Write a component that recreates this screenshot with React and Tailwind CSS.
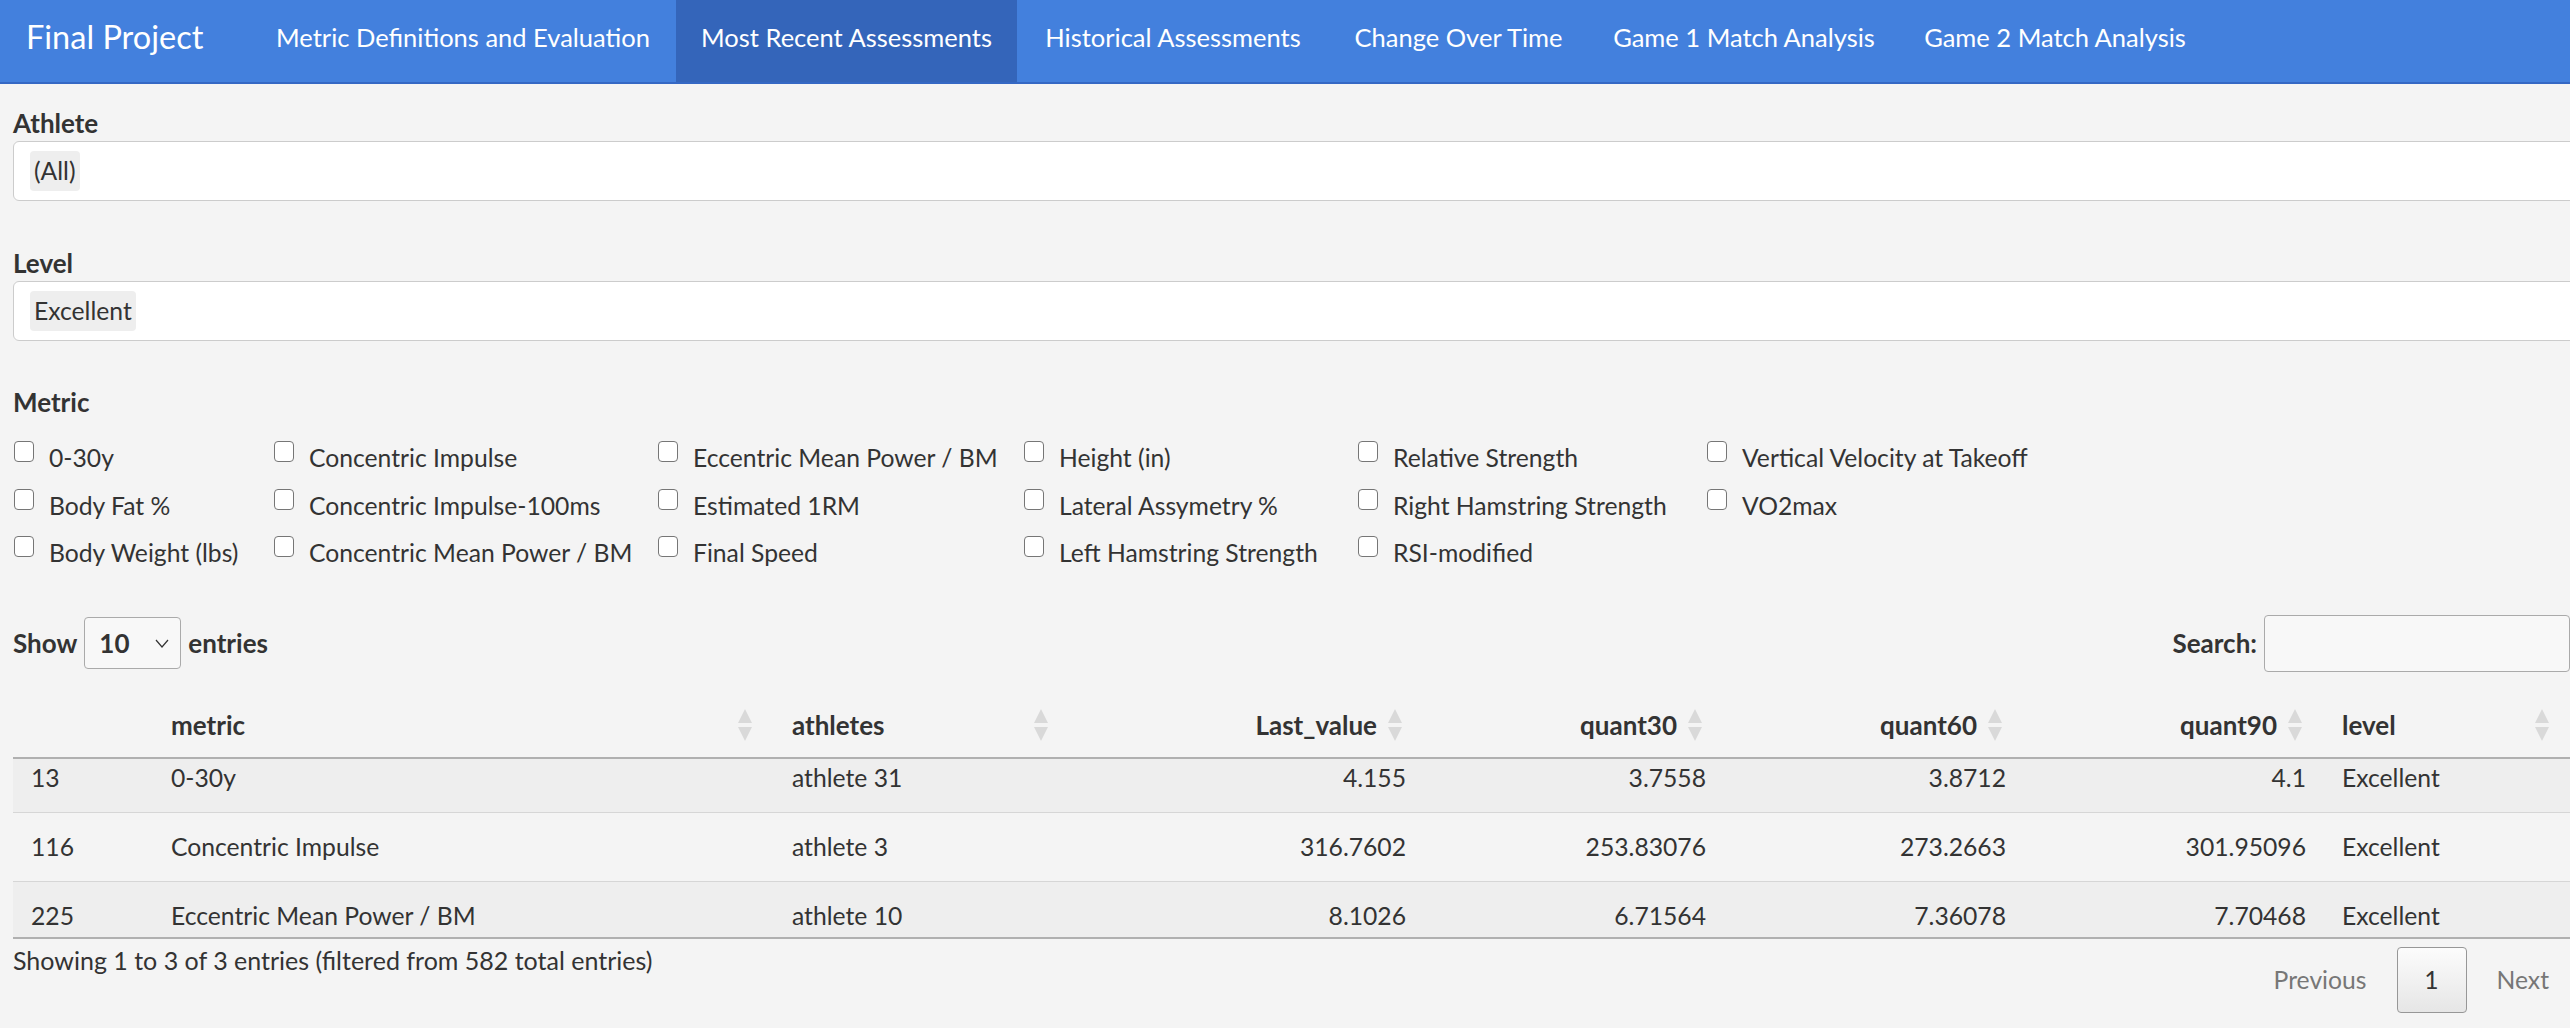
import React from "react";

const navItems = [
    { label: "Metric Definitions and Evaluation", w: "w-[426px]" },
    { label: "Most Recent Assessments", w: "w-[341px]", active: true },
    { label: "Historical Assessments", w: "w-[312px]" },
    { label: "Change Over Time", w: "w-[259px]" },
    { label: "Game 1 Match Analysis", w: "w-[312px]" },
    { label: "Game 2 Match Analysis", w: "w-[310px]" },
];

const metrics = [
    "0-30y",
    "Body Fat %",
    "Body Weight (lbs)",
    "Concentric Impulse",
    "Concentric Impulse-100ms",
    "Concentric Mean Power / BM",
    "Eccentric Mean Power / BM",
    "Estimated 1RM",
    "Final Speed",
    "Height (in)",
    "Lateral Assymetry %",
    "Left Hamstring Strength",
    "Relative Strength",
    "Right Hamstring Strength",
    "RSI-modified",
    "Vertical Velocity at Takeoff",
    "VO2max",
];

const rows = [
    ["13", "0-30y", "athlete 31", "4.155", "3.7558", "3.8712", "4.1", "Excellent"],
    ["116", "Concentric Impulse", "athlete 3", "316.7602", "253.83076", "273.2663", "301.95096", "Excellent"],
    ["225", "Eccentric Mean Power / BM", "athlete 10", "8.1026", "6.71564", "7.36078", "7.70468", "Excellent"],
];

const SortIcon = () => (
    <svg width="14" height="32" viewBox="0 0 14 32" className="shrink-0">
        <polygon points="7,0 14,14 0,14" fill="#d9d9d9" />
        <polygon points="0,18 14,18 7,32" fill="#d9d9d9" />
    </svg>
);

const Cols = () => (
    <colgroup>
        <col className="w-[140px]" />
        <col className="w-[621px]" />
        <col className="w-[296px]" />
        <col className="w-[354px]" />
        <col className="w-[300px]" />
        <col className="w-[300px]" />
        <col className="w-[300px]" />
        <col className="w-[247px]" />
    </colgroup>
);

const SelectBox = ({ value }) => (
    <div className="w-[2600px] h-[60px] bg-white border border-[#cccccc] rounded-[6px] flex items-center pl-[16px]">
        <span className="h-[40px] px-[4px] bg-[#eeeeee] rounded-[4px] flex items-center text-[24.7px] leading-none">
            {value}
        </span>
    </div>
);

export default function App() {
    return (
        <div className="w-[2570px] h-[1028px] overflow-hidden bg-[#f4f4f4] text-[#333333] text-[24.7px] font-['Lato',sans-serif]">
            {/* navbar */}
            <nav className="flex h-[84px] bg-[#4380dd] border-b-2 border-[#3568c4] text-white">
                <div className="w-[250px] pl-[26px] pb-[7px] flex items-center text-[32.5px]">Final Project</div>
                {navItems.map((item) => (
                    <div
                        key={item.label}
                        className={`${item.w} pb-[7px] flex items-center justify-center text-[25.5px] ${
                            item.active ? "bg-[#3465ba]" : ""
                        }`}
                    >
                        {item.label}
                    </div>
                ))}
            </nav>

            <div className="pl-[13px] pt-[21px]">
                <div className="text-[26px] leading-[36px] font-bold">Athlete</div>
                <SelectBox value="(All)" />

                <div className="mt-[44px] text-[26px] leading-[36px] font-bold">Level</div>
                <SelectBox value="Excellent" />

                <div className="mt-[43px] text-[26px] leading-[36px] font-bold">Metric</div>
                <div className="mt-[14px] pl-[1px] grid grid-flow-col grid-rows-3 grid-cols-[260px_384px_366px_334px_349px_auto]">
                    {metrics.map((m) => (
                        <label key={m} className="h-[47.5px] flex items-center gap-[15px] whitespace-nowrap">
                            <input
                                type="checkbox"
                                className="appearance-none w-[20px] h-[21px] mb-[12px] border border-[#767676] rounded-[4px] bg-white shrink-0"
                            />
                            {m}
                        </label>
                    ))}
                </div>

                {/* datatable */}
                <div className="w-[2557px] mt-[38px]">
                    <div className="flex items-center justify-between h-[57px]">
                        <div className="flex items-center gap-[7px] text-[26px] font-bold">
                            <span>Show</span>
                            <div className="w-[97px] h-[52px] border border-[#aaaaaa] rounded-[4px] bg-[#f8f8f8] flex items-center justify-between pl-[14px] pr-[11px]">
                                <span>10</span>
                                <svg width="14" height="9" viewBox="0 0 14 9">
                                    <path d="M1 1 L7 8 L13 1" fill="none" stroke="#333" strokeWidth="1.2" />
                                </svg>
                            </div>
                            <span>entries</span>
                        </div>
                        <div className="flex items-center gap-[7px] text-[26px] font-bold">
                            <span>Search:</span>
                            <div className="w-[306px] h-[57px] border border-[#aaaaaa] rounded-[4px] bg-[#f8f8f8]" />
                        </div>
                    </div>

                    <table className="mt-[26px] table-fixed border-collapse w-[2558px] text-[26px]">
                        <Cols />
                        <thead>
                            <tr className="h-[60px] border-b-2 border-[#b0b0b0]">
                                <th />
                                <th className="pl-[18px] pr-[22px] font-bold text-left">
                                    <div className="flex items-center justify-between pb-[4px]">
                                        <span>metric</span>
                                        <SortIcon />
                                    </div>
                                </th>
                                <th className="pl-[18px] pr-[22px] font-bold text-left">
                                    <div className="flex items-center justify-between pb-[4px]">
                                        <span>athletes</span>
                                        <SortIcon />
                                    </div>
                                </th>
                                {["Last_value", "quant30", "quant60", "quant90"].map((h) => (
                                    <th key={h} className="pl-[18px] pr-[22px] font-bold">
                                        <div className="flex items-center justify-end gap-[11px] pb-[4px]">
                                            <span>{h}</span>
                                            <SortIcon />
                                        </div>
                                    </th>
                                ))}
                                <th className="pl-[18px] pr-[22px] font-bold text-left">
                                    <div className="flex items-center justify-between pb-[4px]">
                                        <span>level</span>
                                        <SortIcon />
                                    </div>
                                </th>
                            </tr>
                        </thead>
                    </table>

                    <div className="h-[180px] overflow-hidden border-b-2 border-[#b0b0b0]">
                        <table className="-mt-[16px] table-fixed border-collapse w-[2558px]">
                            <Cols />
                            <tbody>
                                {rows.map((r, i) => (
                                    <tr
                                        key={r[0]}
                                        className={`h-[69px] border-t border-[#d6d6d6] ${
                                            i % 2 === 0 ? "bg-[#eeeeee]" : ""
                                        }`}
                                    >
                                        {r.map((c, j) => (
                                            <td
                                                key={j}
                                                className={`px-[18px] whitespace-nowrap ${
                                                    j >= 3 && j <= 6 ? "text-right" : "text-left"
                                                }`}
                                            >
                                                {c}
                                            </td>
                                        ))}
                                    </tr>
                                ))}
                            </tbody>
                        </table>
                    </div>

                    <div className="w-[2566px] flex items-start justify-between">
                        <div className="pt-[3px] leading-[36px] text-[25px]">
                            Showing 1 to 3 of 3 entries (filtered from 582 total entries)
                        </div>
                        <div className="mt-[8px] flex items-center">
                            <span className="px-[30px] text-[#777777]">Previous</span>
                            <span className="w-[70px] h-[66px] flex items-center justify-center border border-[#979797] rounded-[4px] bg-gradient-to-b from-[#fcfcfc] to-[#e6e6e6] text-[#333333]">
                                1
                            </span>
                            <span className="px-[30px] text-[#777777]">Next</span>
                        </div>
                    </div>
                </div>
            </div>
        </div>
    );
}
